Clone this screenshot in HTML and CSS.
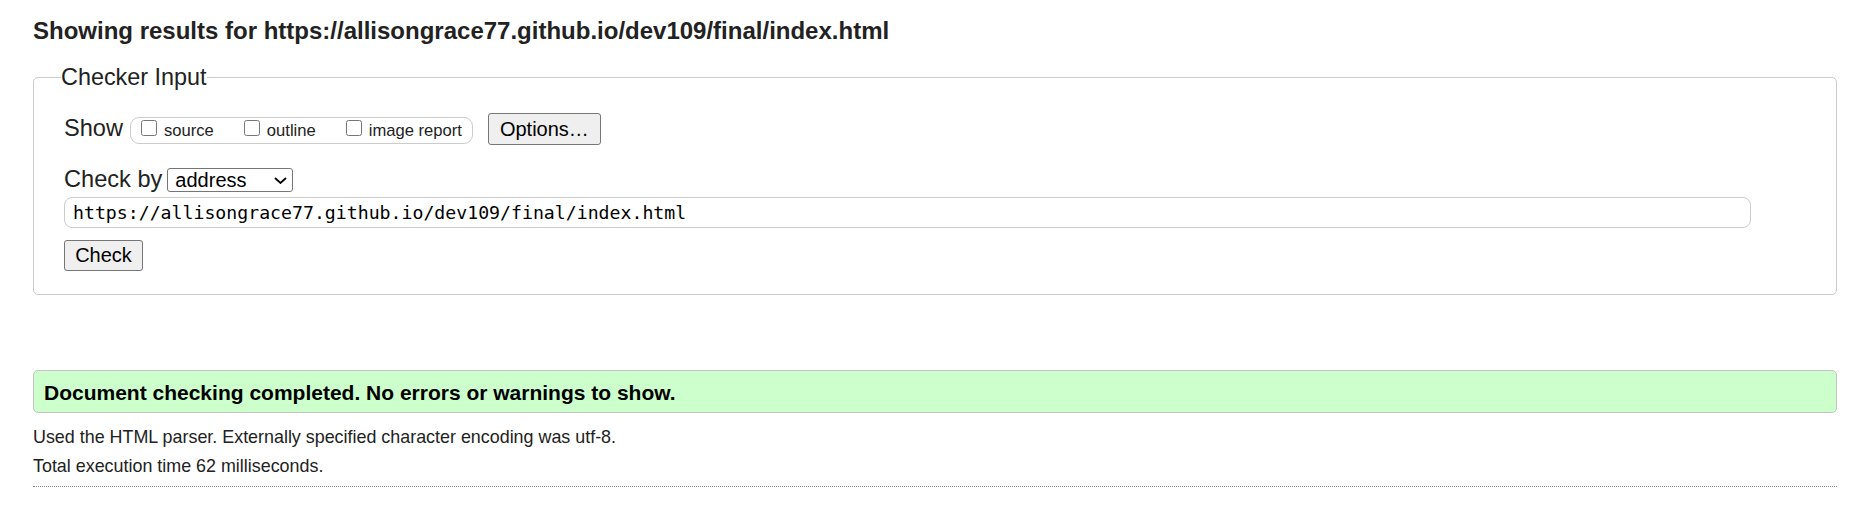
FILE: index.html
```html
<!DOCTYPE html>
<html lang="en">
<head>
<meta charset="utf-8">
<title>Showing results for https://allisongrace77.github.io/dev109/final/index.html - Nu Html Checker</title>
<link rel="stylesheet" href="styles.css">
</head>
<body>
<h1 class="title">Showing results for https://allisongrace77.github.io/dev109/final/index.html</h1>
<form class="checker-form">
  <fieldset class="checker">
    <legend class="legend">Checker Input</legend>
    <div class="rows">
      <div class="row">
        <span class="label">Show</span>
        <span class="pill"><label class="opt"><input type="checkbox" class="cb">source</label><label class="opt"><input type="checkbox" class="cb">outline</label><label class="opt"><input type="checkbox" class="cb">image report</label></span>
        <button type="button" class="btn options">Options…</button>
      </div>
      <div class="row row-by">
        <span class="label">Check by</span>
        <span class="select-wrap">
          <select class="select"><option>address</option></select>
          <svg class="chev" width="13" height="7" viewBox="0 0 13 7"><path d="M1 1 L6.5 6 L12 1" fill="none" stroke="#000" stroke-width="1.8"/></svg>
        </span>
      </div>
      <input class="url" type="url" value="https://allisongrace77.github.io/dev109/final/index.html">
      <button type="button" class="btn check">Check</button>
    </div>
  </fieldset>
</form>
<p class="success">Document checking completed. No errors or warnings to show.</p>
<p class="meta">Used the HTML parser. Externally specified character encoding was utf-8.</p>
<p class="meta meta-time">Total execution time 62 milliseconds.</p>
<hr class="rule">
</body>
</html>
```
FILE: styles.css
```css
html, body {
  margin: 0;
  background: #fff;
}
body {
  padding: 0 17px 0 33px;
  font-family: "Liberation Sans", Arial, sans-serif;
  color: #222;
}
.title {
  margin: 17px 0 0;
  font-size: 24px;
  line-height: 28px;
  font-weight: bold;
  color: #222;
}
.checker-form {
  margin: 0;
}
.checker {
  margin: 19px 0 0;
  border: 1px solid #ccc;
  border-radius: 5px;
  padding: 0 85px 23px 27px;
  min-inline-size: 0;
}
.legend {
  padding: 0;
  font-size: 23.4px;
  line-height: 26px;
  color: #222;
}
.rows {
  padding-left: 3px;
  padding-top: 23px;
}
.row {
  display: flex;
  align-items: baseline;
}
.row-by {
  margin-top: 21px;
}
.label {
  font-size: 23.6px;
  line-height: 26px;
}
.pill {
  display: inline-block;
  margin-left: 7px;
  border: 1px solid #ccc;
  border-radius: 9px;
  padding: 0 10px 0 10px;
  font-size: 16.6px;
  line-height: 25px;
  white-space: nowrap;
}
.opt {
  margin-right: 30px;
}
.opt:last-child {
  margin-right: 0;
}
.cb {
  width: 16px;
  height: 16px;
  margin: 0 7px 2px 0;
  vertical-align: baseline;
}
.btn {
  font-family: "Liberation Sans", Arial, sans-serif;
  font-size: 20px;
  color: #000;
  background: #efefef;
  border: 1px solid #767676;
  border-radius: 3px;
  padding: 0;
}
.options {
  margin-left: 15px;
  width: 113px;
  height: 32px;
}
.select-wrap {
  position: relative;
  display: inline-block;
  margin-left: 5px;
}
.select {
  appearance: none;
  -webkit-appearance: none;
  width: 126px;
  height: 24px;
  margin: 0;
  border: 1px solid #767676;
  border-radius: 3px;
  padding: 0 0 0 7px;
  background: #fff;
  color: #000;
  font-family: "Liberation Sans", Arial, sans-serif;
  font-size: 20px;
  line-height: 22px;
}
.chev {
  position: absolute;
  right: 6px;
  top: 9px;
  pointer-events: none;
}
.url {
  display: block;
  box-sizing: border-box;
  width: 100%;
  height: 31px;
  margin: 5px 0 0;
  border: 1px solid #ccc;
  border-radius: 8px;
  padding: 0 8px;
  font-family: "DejaVu Sans Mono", "Liberation Mono", monospace;
  font-size: 18.2px;
  color: #000;
  background: #fff;
}
.check {
  display: block;
  margin-top: 12px;
  width: 79px;
  height: 31px;
}
.success {
  margin: 75px 0 0;
  border: 1px solid #c4c4c4;
  border-radius: 5px;
  background: #ccffcc;
  padding: 10px 10px 8px;
  font-size: 21px;
  line-height: 23px;
  font-weight: bold;
  color: #000;
}
.meta {
  margin: 14px 0 0;
  font-size: 17.9px;
  line-height: 20px;
  color: #222;
}
.meta-time {
  margin-top: 9px;
}
.rule {
  margin: 10px 0 0;
  height: 0;
  border: 0;
  border-top: 1px dotted #888;
}
```
